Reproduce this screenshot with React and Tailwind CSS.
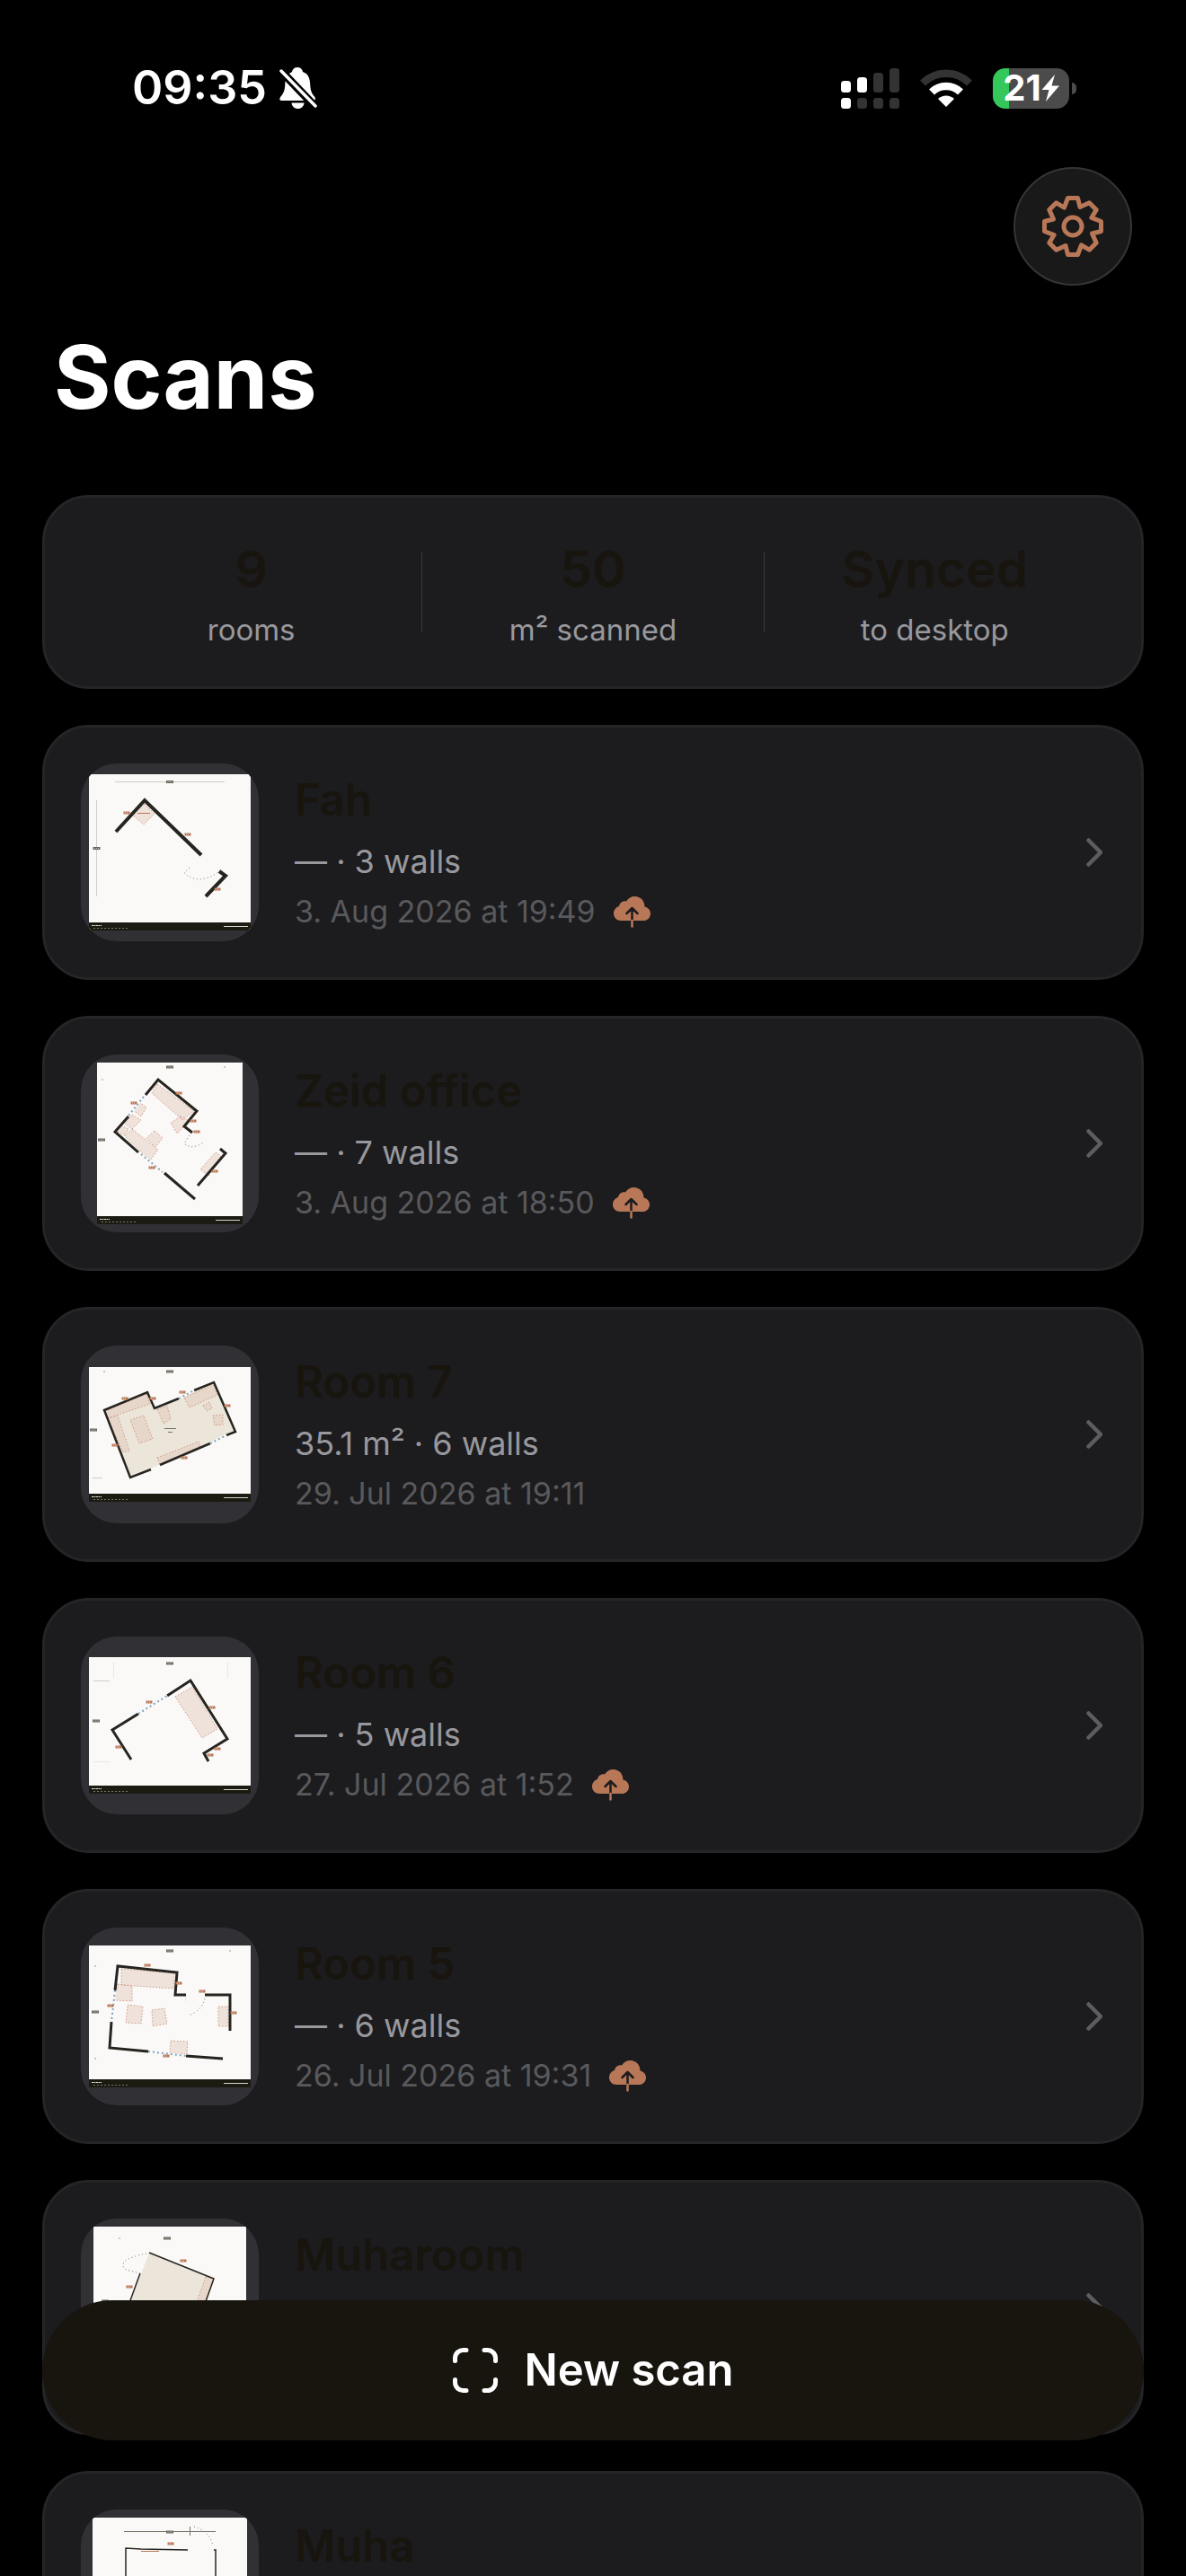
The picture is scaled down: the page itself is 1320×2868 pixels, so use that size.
import React from "react";

const INK = "#26241f";
const COPPER = "#b87858";
const PAPER = "#faf9f7";

const stats = [
  { value: "9", label: "rooms" },
  { value: "50", label: "m² scanned" },
  { value: "Synced", label: "to desktop" },
];

// Plan coordinates are in the 198 x 198 box of the thumbnail.
const scans = [
  {
    name: "Fah",
    detail: "— · 3 walls",
    date: "3. Aug 2026 at 19:49",
    pending: true,
    plan: {
      page: [9, 12, 180, 174],
      wallWidth: 4,
      walls: ["39,76 71,41 134,102", "154,120 161,125 139,148"],
      furniture: ["71,45 82,56 70,68 57,57"],
      rules: ["M38 20.5H160", "M17.5 41V148"],
      dims: [[99, 20.5], [17.5, 94.5]],
      labels: [[51, 55], [119, 79], [152, 140]],
      copper: ["M63 55.5H77"],
      doors: ["M121 116L115 122Q131 136 153 121"],
    },
  },
  {
    name: "Zeid office",
    detail: "— · 7 walls",
    date: "3. Aug 2026 at 18:50",
    pending: true,
    plan: {
      page: [18, 9, 162, 180],
      wallWidth: 3,
      walls: [
        "72,45 86,28 129,63 115,80 124,87",
        "53,69 38,86 64,109",
        "93,132 127,161",
        "155,105 161,110 130,146",
      ],
      furniture: [
        "85,33 126,63 113,73 79,43",
        "111,69 121,74 107,88 100,76",
        "65,53 73,59 67,69 58,62",
        "57,67 67,73 57,83 49,77",
        "45,79 53,83 49,90 39,85",
        "57,83 86,106 77,118 49,91",
        "82,85 91,93 83,103 73,93",
        "150,109 156,113 142,135 133,128",
      ],
      windows: ["70,47 53,68", "67,111 91,131"],
      dims: [[99, 14], [23, 95]],
      labels: [[109, 43], [59, 54], [125, 74], [129, 86], [79, 126], [149, 130]],
      doors: ["M121 90L115 99Q124 107 136 98"],
      dots: [[160, 14], [24, 28]],
    },
  },
  {
    name: "Room 7",
    detail: "35.1 m² · 6 walls",
    date: "29. Jul 2026 at 19:11",
    pending: false,
    plan: {
      page: [9, 24, 180, 150],
      wallWidth: 2.5,
      floor: "26,72 74,52 82,70 148,41 172,96 55,147",
      walls: [
        "78,138 55,147 26,72 74,52 82,70 109,59",
        "126,50 148,41 172,96 162,100",
        "144,109 88,133",
      ],
      furniture: [
        "73,54 77,65 30,81 27,73",
        "30,81 41,78 54,117 47,119",
        "55,83 70,78 80,104 65,109",
        "85,71 96,67 100,82 92,87",
        "115,58 147,44 152,55 121,69",
        "136,67 143,63 146,70 140,73",
        "147,78 158,77 158,88 149,89",
        "85,125 131,107 133,112 88,133",
      ],
      windows: ["109,59 126,50", "144,109 162,100"],
      rules: ["M13 147.5H24"],
      dims: [[99, 29], [14, 94]],
      labels: [[49, 59], [80, 59], [113, 52], [163, 67], [38, 111], [115, 125]],
      marks: ["M93 92.5H106", "M97 96.5H102"],
      dots: [[26, 29]],
    },
  },
  {
    name: "Room 6",
    detail: "— · 5 walls",
    date: "27. Jul 2026 at 1:52",
    pending: true,
    plan: {
      page: [9, 23, 180, 152],
      wallWidth: 3,
      walls: [
        "96,66 122,49 163,114 137,130 142,139",
        "64,86 35,104 56,137",
      ],
      furniture: ["105,67 124,56 152,103 135,113"],
      windows: ["64,86 96,66"],
      rules: ["M14 49.5H32"],
      faint: ["M36.5 28V46", "M163.5 28V46", "M14 139.5H32"],
      dims: [[99, 30], [17, 94]],
      labels: [[76, 73], [146, 79], [152, 125], [144, 132], [42, 123]],
    },
  },
  {
    name: "Room 5",
    detail: "— · 6 walls",
    date: "26. Jul 2026 at 19:31",
    pending: true,
    plan: {
      page: [9, 20, 180, 158],
      wallWidth: 3,
      walls: [
        "38,70 41,43 107,50 105,75 117,75",
        "138,75 166,75 166,115",
        "34,105 32,134 75,138",
        "117,143 158,146",
      ],
      furniture: [
        "45,46 104,51 103,68 45,64",
        "41,63 57,65 57,82 37,81",
        "52,86 69,88 67,107 50,106",
        "79,92 93,90 96,107 80,110",
        "153,88 164,88 164,110 153,110",
        "100,126 119,127 118,141 99,140",
      ],
      windows: ["38,70 34,105", "75,138 117,143"],
      faint: ["M116.5 76V82"],
      dims: [[99, 26], [16, 94]],
      labels: [[74, 42], [109, 62], [135, 71], [33, 87], [170, 95], [95, 143]],
      doors: ["M138 79Q135 92 120 98"],
      dots: [[166, 26], [16, 43], [16, 146]],
    },
  },
  {
    name: "Muharoom",
    plan: {
      page: [14, 9, 170, 180],
      wallWidth: 1.5,
      floor: "76,38 148,67 122,140 38,138",
      walls: ["76,38 148,67 122,140", "66,61 38,138"],
      furniture: ["139,65 148,67 122,140 112,140"],
      dims: [[96, 22], [27, 92]],
      labels: [[114, 47], [54, 76]],
      doors: ["M73 39Q38 46 50 57L66 61"],
      dots: [[43, 22]],
    },
  },
  {
    name: "Muha",
    plan: {
      page: [13, 9, 172, 180],
      wallWidth: 1.5,
      walls: ["50,150 50,43 67,44 119,45", "148,45 150,45 150,150"],
      furniture: [],
      marks: ["M121.5 19V29", "M48 24.5H150"],
      dims: [[99, 25]],
      labels: [[100, 38]],
      copper: ["M67 46.5H87"],
      doors: ["M126 19Q143 24 147 40"],
    },
  },
];

function FloorPlan({ plan, name }) {
  const [x, y, w, h] = plan.page;
  const footerTop = y + h - 9;
  return (
    <svg viewBox="0 0 198 198" className="size-full" role="img" aria-label={`Floor plan of ${name}`}>
      <rect x={x} y={y} width={w} height={h} fill={PAPER} />
      {plan.rules?.map((d) => (
        <path key={d} d={d} stroke="#cfcdca" fill="none" />
      ))}
      {plan.faint?.map((d) => (
        <path key={d} d={d} stroke="#e9e7e4" fill="none" />
      ))}
      {plan.floor && <polygon points={plan.floor} fill="#ece6da" />}
      {plan.furniture.map((points) => (
        <polygon
          key={points}
          points={points}
          fill="#e3c6b9"
          fillOpacity="0.45"
          stroke="#c4836b"
          strokeWidth="0.8"
          strokeDasharray="1.5 2"
        />
      ))}
      {plan.walls.map((points) => (
        <polyline key={points} points={points} fill="none" stroke={INK} strokeWidth={plan.wallWidth} />
      ))}
      {plan.windows?.map((points) => (
        <g key={points} fill="none">
          <polyline points={points} stroke={PAPER} strokeWidth="3" />
          <polyline points={points} stroke="#7fa3bd" strokeWidth="2" strokeDasharray="2 3" />
        </g>
      ))}
      {plan.doors?.map((d) => (
        <path key={d} d={d} fill="none" stroke="#6d6a66" strokeWidth="1" strokeDasharray="1 3" />
      ))}
      {plan.marks?.map((d) => (
        <path key={d} d={d} fill="none" stroke="#77746a" />
      ))}
      {plan.copper?.map((d) => (
        <path key={d} d={d} fill="none" stroke={COPPER} />
      ))}
      {plan.dims.map(([cx, cy]) => (
        <g key={`${cx}-${cy}`}>
          <rect x={cx - 4} y={cy - 1.5} width="8" height="3" fill="#66645a" />
          <path d={`M${cx - 2.5} ${cy}h5`} stroke="#cfcdc6" strokeDasharray="1 1" />
        </g>
      ))}
      {plan.labels.map(([cx, cy]) => (
        <g key={`${cx}-${cy}`}>
          <rect x={cx - 3.5} y={cy - 1.5} width="7" height="3" fill={COPPER} />
          <path d={`M${cx - 2} ${cy}h4`} stroke="#ecd2c5" strokeDasharray="1 1" />
        </g>
      ))}
      {plan.dots?.map(([cx, cy]) => (
        <circle key={`${cx}-${cy}`} cx={cx} cy={cy} r="0.7" fill="#77746a" />
      ))}
      <rect x={x} y={footerTop} width={w} height="9" fill="#1b1b12" />
      <path d={`M${x + 3} ${footerTop + 3.5}h11`} stroke="#e6e4dc" strokeDasharray="2 0.5" />
      <path d={`M${x + 5} ${footerTop + 6.5}h40`} stroke="#77746a" strokeDasharray="2 2" />
      <path d={`M${x + w - 30} ${footerTop + 4.5}h27`} stroke="#d6d4cc" />
    </svg>
  );
}

function BellOffIcon() {
  return (
    <svg viewBox="0 0 42 46" className="h-[46px] w-[42px]" aria-hidden="true">
      <path
        d="M20 0c-3.500 0-5.500 2-6 5C8 8 6.500 13 6.300 19 6 27 3.500 30 1.500 32.500-.5 35 0 37 3 37H37c3 0 3.800-2 2-4.500C36 29 34.500 26 34.200 19 34 12 32 7 26 5 25.500 2 23.500 0 20 0Z"
        fill="#fff"
      />
      <path d="M13.500 39.500h14c-.5 4-3 6.500-7 6.500s-6.500-2.500-7-6.500Z" fill="#fff" />
      <path d="M1 3L40 44" stroke="#000" strokeWidth="9" />
      <path d="M2 4L40 43" stroke="#fff" strokeWidth="3.500" strokeLinecap="round" />
    </svg>
  );
}

function SignalIcon() {
  return (
    <svg viewBox="0 0 65 45" className="h-[45px] w-[65px]" aria-hidden="true">
      <g fill="#fff">
        <rect x="0" y="14" width="11" height="13" rx="3.500" />
        <rect x="18" y="10" width="11" height="17" rx="3.500" />
        <rect x="0" y="33" width="11" height="12" rx="3.500" />
      </g>
      <g fill="#333">
        <rect x="36" y="5" width="11" height="22" rx="3.500" />
        <rect x="54" y="0" width="11" height="27" rx="3.500" />
        <rect x="18" y="33" width="11" height="12" rx="3.500" />
        <rect x="36" y="33" width="11" height="12" rx="3.500" />
        <rect x="54" y="33" width="11" height="12" rx="3.500" />
      </g>
    </svg>
  );
}

function WifiIcon() {
  return (
    <svg viewBox="0 0 58 42" className="h-[42px] w-[58px]" aria-hidden="true">
      <path d="M3 15.500A37 37 0 0 1 55 15.500" fill="none" stroke="#333" strokeWidth="8.500" />
      <path d="M13 25.500A23 23 0 0 1 45 25.500" fill="none" stroke="#fff" strokeWidth="8.500" />
      <path d="M20 33a13 13 0 0 1 18 0L29 42Z" fill="#fff" />
    </svg>
  );
}

function Battery() {
  return (
    <div className="flex items-center gap-[3px]">
      <div className="flex h-[45px] w-[85px] items-center justify-center rounded-[14px] bg-linear-to-r from-[#34c759] from-21% to-[#4b4b4b] to-21%">
        <span className="text-[40px] leading-none font-bold">21</span>
        <svg viewBox="0 0 20 30" className="h-[30px] w-[20px]" aria-hidden="true">
          <path d="M15 0L0.500 17H8.500L5 30L20 12.500H11.500Z" fill="#fff" />
        </svg>
      </div>
      <div className="h-[13px] w-[5px] rounded-r-full bg-[#4b4b4b]" />
    </div>
  );
}

// Eight teeth that meet in a V between each pair
const gearPoints = Array.from({ length: 8 }, (_, i) => {
  const a = (i * Math.PI) / 4;
  return [[-5.5, -31.5], [5.5, -31.5], [8, -21.5]].map(([x, y]) => {
    const px = x * Math.cos(a) - y * Math.sin(a);
    const py = x * Math.sin(a) + y * Math.cos(a);
    return `${px.toFixed(2)},${py.toFixed(2)}`;
  });
})
  .flat()
  .join(" ");

function GearIcon() {
  return (
    <svg
      viewBox="-35 -35 70 70"
      className="size-[70px]"
      fill="none"
      stroke={COPPER}
      strokeWidth="5"
      strokeLinejoin="round"
      aria-hidden="true"
    >
      <polygon points={gearPoints} />
      <circle r="10" />
    </svg>
  );
}

function CloudUploadIcon() {
  return (
    <svg viewBox="0 0 41 35" className="h-[35px] w-[41px]" aria-hidden="true">
      <path
        d="M8.500 27C3.500 27 0 23.500 0 19c0-4 2.500-7 6-8 .5-4 4.500-6.500 8-5.500C16 2 19.500 0 23.500 0 30 0 34.500 5 34.500 11.500 38.500 12.500 41 15.500 41 19.200 41 23.600 37.500 27 33 27Z"
        fill={COPPER}
      />
      <path d="M20.500 27V13.500M14.500 19L20.500 13L26.500 19" fill="none" stroke="#1c1c1e" strokeWidth="2.500" strokeLinecap="round" strokeLinejoin="round" />
      <path d="M20.500 27V33.500" stroke={COPPER} strokeWidth="2.500" strokeLinecap="round" />
    </svg>
  );
}

function ChevronIcon() {
  return (
    <svg viewBox="0 0 18 32" className="h-[32px] w-[18px]" aria-hidden="true">
      <path d="M2.500 2.500L16 16L2.500 29.500" fill="none" stroke="#5d5d60" strokeWidth="4.500" strokeLinecap="round" strokeLinejoin="round" />
    </svg>
  );
}

function ViewfinderIcon() {
  return (
    <svg viewBox="0 0 50 50" className="size-[50px]" aria-hidden="true">
      <path
        d="M2.500 14.500V11.500a9 9 0 0 1 9-9H15M35 2.500h3.500a9 9 0 0 1 9 9V14.500M47.500 35.500V38.500a9 9 0 0 1-9 9H35M15 47.500H11.500a9 9 0 0 1-9-9V35.500"
        fill="none"
        stroke="#fff"
        strokeWidth="5"
        strokeLinecap="round"
      />
    </svg>
  );
}

function StatusBar() {
  return (
    <div className="flex h-16 items-center justify-between pr-[122px] pl-[147px]">
      <div className="flex items-center gap-[14px]">
        <span className="text-[52px] leading-none font-semibold">09:35</span>
        <BellOffIcon />
      </div>
      <div className="flex items-center gap-[23px]">
        <SignalIcon />
        <WifiIcon />
        <Battery />
      </div>
    </div>
  );
}

function StatsCard() {
  return (
    <section className="flex items-center rounded-[52px] border-3 border-[#252527] bg-[#1c1c1e] p-10">
      {stats.map((stat, i) => (
        <React.Fragment key={stat.label}>
          {i > 0 && <div className="h-[90px] w-px bg-[#3a3a3c]" />}
          <div className="flex h-[130px] flex-1 flex-col items-center justify-center gap-[14px]">
            <span className="text-[57px] leading-[70px] font-semibold text-[#18140e]">{stat.value}</span>
            <span className="text-[33px] leading-9 text-[#98989d]">{stat.label}</span>
          </div>
        </React.Fragment>
      ))}
    </section>
  );
}

function ScanRow({ scan }) {
  return (
    <li>
      <a
        href="#"
        className="flex items-center gap-10 rounded-[52px] border-3 border-[#252527] bg-[#1c1c1e] py-10 pr-[43px] pl-10"
      >
        <div className="size-[198px] shrink-0 overflow-hidden rounded-[40px] bg-[#313035]">
          <FloorPlan plan={scan.plan} name={scan.name} />
        </div>
        <div className="flex min-w-0 flex-1 flex-col gap-[15px] pb-1">
          <h2 className="text-[49px] leading-[60px] font-semibold text-[#18140e]">{scan.name}</h2>
          <p className="min-h-[46px] text-[36px] leading-[46px] text-[#98989d]">{scan.detail}</p>
          <div className="flex min-h-9 items-center gap-5">
            {scan.date && <span className="text-[34px] leading-9 text-[#59595c]">{scan.date}</span>}
            {scan.pending && <CloudUploadIcon />}
          </div>
        </div>
        <ChevronIcon />
      </a>
    </li>
  );
}

export default function App() {
  return (
    <div className="relative h-screen overflow-hidden bg-black font-['Inter',sans-serif] text-white">
      <div className="h-full overflow-y-auto pt-[66px] [scrollbar-width:none]">
        <StatusBar />
        <header className="px-[60px] pt-14">
          <div className="flex justify-end">
            <button
              type="button"
              aria-label="Settings"
              className="flex size-[132px] items-center justify-center rounded-full border-2 border-[#353535] bg-[#191919]"
            >
              <GearIcon />
            </button>
          </div>
          <h1 className="mt-[42px] text-[97px] leading-[120px] font-bold">Scans</h1>
        </header>
        <main className="mt-[71px] flex flex-col gap-10 px-[47px]">
          <StatsCard />
          <ul className="flex flex-col gap-10">
            {scans.map((scan) => (
              <ScanRow key={scan.name} scan={scan} />
            ))}
          </ul>
        </main>
      </div>

      <div className="absolute inset-x-0 bottom-[151px] px-[47px]">
        <button
          type="button"
          className="flex h-[156px] w-full items-center justify-center gap-[30px] rounded-full bg-[#18140e] text-[49px] font-semibold"
        >
          <ViewfinderIcon />
          New scan
        </button>
      </div>
    </div>
  );
}
